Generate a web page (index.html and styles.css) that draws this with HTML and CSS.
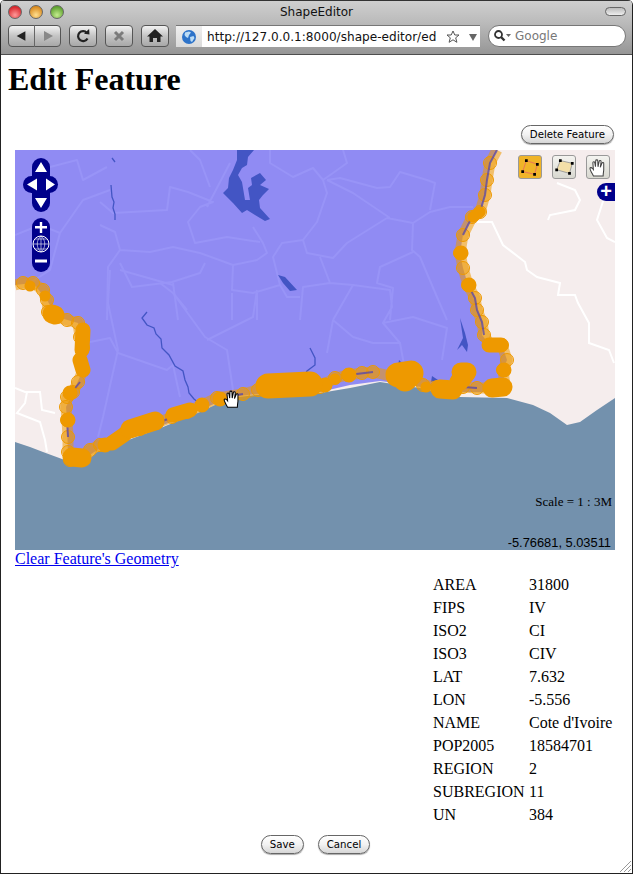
FILE: index.html
```html
<!DOCTYPE html>
<html lang="en">

<head>
    <meta charset="UTF-8">
    <title>ShapeEditor</title>
    <link rel="stylesheet" href="styles.css">
</head>

<body>
    <div class="window">
        <div class="chrome">
            <div class="titlebar">
                <span class="light light-red"></span>
                <span class="light light-yellow"></span>
                <span class="light light-green"></span>
                <span class="title">ShapeEditor</span>
                <span class="pill"></span>
            </div>
            <div class="toolbar">
                <div class="tool-btn tool-double">
                    <svg width="26" height="22" viewBox="0 0 26 22"><path class="ic-dark" d="M17 6v10l-9-5z"/></svg>
                    <svg width="26" height="22" viewBox="0 0 26 22"><path class="ic-soft" d="M9 6v10l9-5z"/></svg>
                </div>
                <div class="tool-btn tool-reload">
                    <svg width="26" height="22" viewBox="0 0 26 22"><path class="ic-line" d="M17.500 13.500a5 5 0 1 1-.6-5.600"/><path class="ic-dark" d="M14 8.800l5.500.6-.4-5.500z"/></svg>
                </div>
                <div class="tool-btn tool-stop">
                    <svg width="26" height="22" viewBox="0 0 26 22"><path class="ic-x" d="M9 7l8 8M17 7l-8 8"/></svg>
                </div>
                <div class="tool-btn tool-home">
                    <svg width="26" height="22" viewBox="0 0 26 22"><path class="ic-dark" d="M13 4l-8 7.500h2.500V17h3.500v-4h4v4h3.500v-5.500H21z"/></svg>
                </div>
                <div class="urlbar">
                    <div class="favicon">
                        <svg width="16" height="16" viewBox="0 0 16 16">
                            <circle class="globe-sea" cx="8" cy="8" r="7"/>
                            <path class="globe-land" d="M4 3.500l4-1 2 1-2 2.500-1 3-2-1-1.500-2zM9 8l3.500-1 1 2-2.500 4-1.500-1z"/>
                        </svg>
                    </div>
                    <div class="url">http://127.0.0.1:8000/shape-editor/ed</div>
                    <svg class="url-star" width="16" height="16" viewBox="0 0 16 16"><path class="ic-star" d="M8 2l1.800 4h4.200l-3.300 2.800 1.200 4.500L8 10.800l-3.900 2.500 1.200-4.500L2 6h4.200z"/></svg>
                    <svg class="url-drop" width="10" height="10" viewBox="0 0 10 10"><path class="ic-grey" d="M1 2h8l-4 7z"/></svg>
                </div>
                <div class="search">
                    <svg width="20" height="14" viewBox="0 0 20 14"><circle class="ic-lens" cx="5.500" cy="5.500" r="3.500"/><path class="ic-handle" d="M8 8l3.500 3.500"/><path class="ic-grey" d="M13 5h5l-2.500 3z"/></svg>
                    <span>Google</span>
                </div>
            </div>
        </div>

        <div class="page">
            <h1>Edit Feature</h1>
            <div class="delete-row"><button class="btn">Delete Feature</button></div>

            <div class="map">
                <svg class="map-svg" width="600" height="400" viewBox="15 150 600 400">
                    <defs>
                        <marker id="vx" markerUnits="userSpaceOnUse" markerWidth="16" markerHeight="16" refX="8" refY="8">
                            <circle class="vertex" cx="8" cy="8" r="6.500"/>
                        </marker>
                    </defs>
                    <rect class="land" x="15" y="150" width="600" height="400"/>

                    <!-- borders in the neighbouring countries -->
                    <path class="land-line" d="M477 222l15 0 11 23 22 17 2 8 10 7 23 6-2 12 17 0 3 8 11 20 0 20 20 7 5 13M557 183l18 7 5 10-5 10-25 5-2 5M15 388l10 4 15 0 2 18 13 3M27 392l-2 11-8 10 23 9 5 18 2 12M605 195l-8 25 10 18 8 4"/>

                    <path class="sea" d="M15 442L30 447 43 452 62 459 80 467 97 452 123 442 163 427 200 412 230 398 257 395 320 393 350 388 380 382 420 388 460 397 507 398 533 405 550 413 567 425 580 422 597 410 615 398V550H15Z"/>

                    <path class="country" d="M15 150H497L490 163 487 180 485 195 480 212 472 217 463 235 460 253 463 268 468 285 475 298 477 310 482 322 482 335 490 345 502 345 507 360 503 370 505 387 490 392 463 392 437 390 410 385 380 381 350 385 320 392 257 394 230 397 200 410 163 425 123 440 97 450 80 462 68 458 67 420 66 407 73 392 83 370 80 337 78 323 57 317 47 300 33 283 15 285Z"/>

                    <!-- regions -->
                    <path class="region" d="M100 202L113 213 167 210 170 187 188 192 213 202 200 207 188 222 195 243 227 237 260 242M120 250L150 252 173 247 200 253 233 265 257 260 267 253 263 243 253 227M100 225L115 232 120 250 108 267 107 320M120 263L132 287 172 282 200 273 205 263M173 283L178 320M233 265L232 290 253 293 280 285 273 257 282 243 303 240 317 222 327 193 323 180 313 168 293 177 270 163 270 150M303 240L307 253 333 258 347 243 387 218 413 223 430 212 450 207 473 207M327 180L340 178 377 188 390 187 400 172 427 180 435 183 430 210M343 150L347 163 333 173 323 180M390 218L353 193 327 180M413 223L412 250 420 257 437 297 447 320M413 252L380 267 377 283 393 288 390 320M320 257L330 283 303 287 300 320M330 283L353 285 333 320M353 285L390 290 392 307 383 323 413 317 447 328 442 360M232 293L232 320M257 293L257 320M280 285L287 297 300 297M190 150L200 160 210 187M230 163L207 207"/>
                    <path class="region" d="M50 167L77 160 83 180 107 167M60 233L83 200 110 190M110 270L108 303 118 350 103 417 98 437M90 342L110 338 118 353 167 370 173 365 180 397M187 310L173 293 205 337 227 350 233 390M257 290L253 317 207 340M173 285L120 270M160 283L173 293M333 320L327 353M383 323L400 343 373 343 353 337 333 320M400 343L405 370M15 235L40 225 60 233 50 270 30 283"/>

                    <!-- lakes and rivers -->
                    <path class="water" d="M237 150L254 150 248 157 247 165 242 168 238 175 242 182 245 200 250 200 248 188 252 185 251 178 260 173 266 180 260 185 269 189 263 195 259 200 260 208 270 219 265 221 255 215 247 210 242 213 233 203 223 193 228 188 229 178 233 170 237 160Z"/>
                    <path class="water" d="M278 275L285 277 297 290 290 291 283 283ZM460 318L465 333 468 345 467 352 462 345 457 350 463 338ZM399 360L403 364 397 372ZM432 376L438 380 431 382Z"/>
                    <path class="river" d="M147 312l-5 6 5 7 7 3 2 6 5 5 1 9 7 7 6 11 8 5 2 9 3 7 1 6 5 6 5 4M112 158l3 4M111 185l1 12 2 5-1 6 2 6 0 6M310 348l5 10 0 7-8 6-3 6"/>

                    <!-- edited geometry -->
                    <path class="ring" marker-mid="url(#vx)" d="M497 150L490 163 487 180 485 195 480 212 472 217 463 235 460 253 463 268 468 285 475 298 477 310 482 322 484 335 490 345 502 345 507 360 503 370 505 387 490 388 477 388 463 387 453 390 437 387 423 385 410 373 395 377 373 372 362 373 348 375 335 378 320 387 298 385 270 385 258 390 243 394 217 398 202 405 187 412 172 417 157 423 140 429 125 433 113 442 100 445 90 450 80 458 70 460 68 452 68 437 67 420 66 407 67 397 73 392 78 382 83 370 80 360 83 348 80 337 78 323 67 320 57 317 48 312 47 300 43 290 33 283 23 283 15 285"/>
                    <path class="edge" d="M497 150L490 163 487 180 485 195 480 212M472 217L463 235M468 285L475 298 477 310 482 322 484 335M477 388L463 387M437 387L423 385M373 372L348 375M243 394L217 398M187 412L157 423M80 382L72 392M68 437L67 420"/>

                    <path class="blob" d="M461 253h.01M469 285h.01M489 345L501 345M504 370h.01M349 375h.01M202 405h.01M220 399h.01M68 420h.01M70 393h.01M83 330L82 350M80 360L83 370M325 385h.01M105 445h.01M125 434L112 443M173 415L190 410"/>
                    <path class="blob blob-s" d="M473 217L480 212M30 286h.01M45 296h.01M335 379h.01M426 387h.01"/>
                    <path class="blob blob-l" d="M492 388L503 387M461 372L467 372 459 382M52 314L55 315M72 457L82 458M130 429L155 421M440 389L453 390"/>
                    <path class="blob blob-xl" d="M398 375L411 373 405 379M268 386L310 384"/>

                    <path class="hand" transform="translate(223 390) scale(1.150)" d="M4 15C3 13 1 10 1 8.500 1 7.500 2.500 7.500 3.200 8.500L4 9.500 3.500 3.500C3.500 2.300 5 2.300 5.200 3.500L5.800 7 6 1.800C6 .7 7.700 .7 7.800 1.800L8 7 9 2.300C9.200 1.200 10.800 1.400 10.700 2.600L10 7.500 11.500 3.800C11.900 2.800 13.300 3.300 13 4.400L13 10C12.700 12 12.500 13 12.500 15Z"/>
                </svg>

                <svg class="pan" width="36" height="54" viewBox="0 0 36 54">
                    <rect class="ctl" x="9" y="0" width="18" height="54" rx="9"/>
                    <rect class="ctl" x="0" y="18" width="35" height="17" rx="8.500"/>
                    <path class="ctl-w" d="M18 4l6 10H12zM18 50l-6-10h12zM4 26.500l10-6v12zM32 26.500l-9 6v-12z"/>
                </svg>
                <svg class="zoombar" width="18" height="54" viewBox="0 0 18 54">
                    <rect class="ctl" width="18" height="54" rx="9"/>
                    <path class="ctl-w" d="M7.800 4h2.400v4H15v2.400h-4.800V15H7.800v-4.600H3V8h4.800zM3 41.500h12v3H3z"/>
                    <circle class="ctl-globe" cx="9" cy="26" r="8"/>
                    <path class="ctl-mesh" d="M9 18v16M1 26h16M3 21h12M3 31h12M9 18c-5 4-5 12 0 16M9 18c5 4 5 12 0 16"/>
                </svg>

                <div class="map-tools">
                    <svg class="map-tool map-tool-on" width="24" height="24" viewBox="0 0 24 24">
                        <path class="poly-line" d="M8 5l12 4-3 11L4 17z"/>
                        <path class="poly-dots" d="M8 5h.01M20 9h.01M17 20h.01M4 17h.01"/>
                    </svg>
                    <svg class="map-tool" width="24" height="24" viewBox="0 0 24 24">
                        <path class="poly-fill" d="M8 5l13 3-3 11L4 15z"/>
                        <path class="poly-dots" d="M8 5h.01M21 8h.01M18 19h.01M4 15h.01"/>
                    </svg>
                    <svg class="map-tool" width="24" height="24" viewBox="0 0 24 24">
                        <path class="hand hand-tool" transform="translate(2 3) scale(1.250)" d="M4 15C3 13 1 10 1 8.500 1 7.500 2.500 7.500 3.200 8.500L4 9.500 3.500 3.500C3.500 2.300 5 2.300 5.200 3.500L5.800 7 6 1.800C6 .7 7.700 .7 7.800 1.800L8 7 9 2.300C9.200 1.200 10.800 1.400 10.700 2.600L10 7.500 11.500 3.800C11.900 2.800 13.300 3.300 13 4.400L13 10C12.700 12 12.500 13 12.500 15Z"/>
                    </svg>
                </div>
                <div class="layer-tab">+</div>
                <div class="scale">Scale = 1 : 3M</div>
                <div class="coords">-5.76681, 5.03511</div>
            </div>

            <a class="clear-link" href="#">Clear Feature's Geometry</a>

            <div class="attrs">
                <div>AREA</div><div>31800</div>
                <div>FIPS</div><div>IV</div>
                <div>ISO2</div><div>CI</div>
                <div>ISO3</div><div>CIV</div>
                <div>LAT</div><div>7.632</div>
                <div>LON</div><div>-5.556</div>
                <div>NAME</div><div>Cote d'Ivoire</div>
                <div>POP2005</div><div>18584701</div>
                <div>REGION</div><div>2</div>
                <div>SUBREGION</div><div>11</div>
                <div>UN</div><div>384</div>
            </div>

            <div class="actions">
                <button class="btn">Save</button>
                <button class="btn">Cancel</button>
            </div>
        </div>

        <svg class="grip" width="14" height="14" viewBox="0 0 14 14"><path class="grip-line" d="M13 2L2 13M13 6L6 13M13 10L10 13"/></svg>
    </div>
</body>

</html>
```

FILE: styles.css
```css
* {
    padding: 0;
    margin: 0;
    box-sizing: border-box;
}

body {
    background-color: #fff;
    font-family: "Liberation Serif", serif;
    color: #000;
    overflow: hidden;
}

.window {
    position: relative;
    width: 633px;
    height: 874px;
    border: 1px solid #222;
    border-top: 0;
    border-radius: 5px 5px 0 0;
    overflow: hidden;
}

/* browser chrome */
.chrome {
    height: 55px;
    background: linear-gradient(#cfcfcf, #bbb 40%, #969696);
    border-top: 1px solid #333;
    border-bottom: 1px solid #4e4e4e;
    font-family: "DejaVu Sans", sans-serif;
}

.titlebar {
    display: flex;
    align-items: center;
    height: 21px;
    padding-left: 7px;
    gap: 7px;
    position: relative;
}

.light {
    width: 14px;
    height: 14px;
    border-radius: 50%;
    border: 1px solid #666;
}

.light-red {
    background: radial-gradient(circle at 50% 75%, #ff9a9a, #d8262c 75%);
}

.light-yellow {
    background: radial-gradient(circle at 50% 75%, #ffdf90, #d98a1e 75%);
}

.light-green {
    background: radial-gradient(circle at 50% 75%, #c4ec8e, #5ea12f 75%);
}

.title {
    position: absolute;
    left: 0;
    right: 0;
    text-align: center;
    font-size: 12px;
    color: #111;
}

.pill {
    position: absolute;
    right: 6px;
    top: 6px;
    width: 21px;
    height: 9px;
    border-radius: 5px;
    border: 1px solid #666;
    background: linear-gradient(#bbb, #eee);
}

.toolbar {
    display: flex;
    align-items: flex-start;
    height: 24px;
    margin-top: 3px;
    padding-left: 7px;
}

.tool-btn {
    height: 22px;
    display: flex;
    border: 1px solid #555;
    border-radius: 4px;
    background: linear-gradient(#f2f2f2, #c4c4c4 50%, #a8a8a8);
}

.tool-double {
    width: 53px;
}

.tool-double svg:first-child {
    border-right: 1px solid #666;
}

.tool-reload {
    width: 28px;
    margin-left: 8px;
}

.tool-stop {
    width: 28px;
    margin-left: 8px;
}

.tool-home {
    width: 28px;
    margin-left: 8px;
}

.tool-btn svg {
    flex: none;
    margin-top: -1px;
}

.ic-dark {
    fill: #222;
}

.ic-soft {
    fill: #888;
}

.ic-grey {
    fill: #666;
}

.ic-line {
    fill: none;
    stroke: #222;
    stroke-width: 2.2;
}

.ic-x {
    fill: none;
    stroke: #7b7b7b;
    stroke-width: 3;
}

.ic-star {
    fill: #fff;
    stroke: #555;
}

.ic-lens {
    fill: none;
    stroke: #333;
    stroke-width: 1.8;
}

.ic-handle {
    stroke: #333;
    stroke-width: 2.4;
}

.urlbar {
    display: flex;
    align-items: center;
    width: 304px;
    height: 22px;
    margin-left: 7px;
    background: #fff;
    border-top: 1px solid #777;
    overflow: hidden;
}

.favicon {
    display: flex;
    align-items: center;
    justify-content: center;
    flex: none;
    width: 26px;
    height: 22px;
    background: linear-gradient(#efefef, #d9d9d9);
}

.globe-sea {
    fill: #2d73c9;
}

.globe-land {
    fill: #bcdcf5;
}

.url {
    flex: none;
    width: 238px;
    margin-left: 5px;
    font-size: 12.100px;
    white-space: nowrap;
    color: #111;
}

.url-star {
    flex: none;
}

.url-drop {
    flex: none;
    margin-left: 7px;
}

.search {
    display: flex;
    align-items: center;
    width: 138px;
    height: 22px;
    margin-left: 8px;
    padding-left: 4px;
    border-radius: 11px;
    background: #fff;
    border: 1px solid #777;
    font-size: 12px;
    color: #777;
    gap: 2px;
}

/* page content */
.page {
    padding-left: 7px;
}

h1 {
    font-size: 32px;
    font-weight: bold;
    line-height: 37px;
    margin-top: 6px;
}

.delete-row {
    display: flex;
    justify-content: flex-end;
    margin-top: 27px;
    padding-right: 18px;
}

.btn {
    height: 19px;
    padding: 0 8px;
    border: 1px solid #666;
    border-radius: 10px;
    background: linear-gradient(#fff, #f2f2f2 50%, #d6d6d6);
    font-family: "DejaVu Sans", sans-serif;
    font-size: 10.200px;
    color: #000;
    box-shadow: 0 1px 1px #aaa;
}

.map {
    position: relative;
    width: 600px;
    height: 400px;
    margin-top: 6px;
    margin-left: 7px;
    overflow: hidden;
}

.map-svg {
    display: block;
}

.land {
    fill: #f5eded;
}

.sea {
    fill: #7391ad;
}

.land-line {
    fill: none;
    stroke: #fff;
    stroke-width: 2;
}

.country {
    fill: #908bf3;
}

.region {
    fill: none;
    stroke: #9894f7;
    stroke-width: 2;
    stroke-linejoin: round;
}

.water {
    fill: #4355c4;
}

.river {
    fill: none;
    stroke: #4355c4;
    stroke-width: 1.300;
}

.ring {
    fill: none;
    stroke: #ee9900;
    stroke-opacity: .55;
    stroke-width: 11;
    stroke-linejoin: round;
}

.vertex {
    fill: #ee9900;
    fill-opacity: .4;
    stroke: #ee9900;
    stroke-width: 1;
}

.edge {
    fill: none;
    stroke: #4a3fb5;
    stroke-width: 2;
    stroke-opacity: .7;
}

.blob {
    fill: none;
    stroke: #ee9900;
    stroke-width: 15;
    stroke-linecap: round;
    stroke-linejoin: round;
}

.blob-s {
    stroke-width: 11;
}

.blob-l {
    stroke-width: 19;
}

.blob-xl {
    stroke-width: 25;
}

.hand {
    fill: #fff;
    stroke: #000;
    stroke-width: .9;
}

.hand-tool {
    stroke: #444;
}

.pan {
    position: absolute;
    left: 8px;
    top: 8px;
}

.zoombar {
    position: absolute;
    left: 17px;
    top: 68px;
}

.ctl {
    fill: #00008b;
}

.ctl-w {
    fill: #fff;
}

.ctl-globe {
    fill: #00008b;
    stroke: #fff;
}

.ctl-mesh {
    fill: none;
    stroke: #fff;
    stroke-width: .6;
}

.map-tools {
    position: absolute;
    top: 5px;
    right: 5px;
    display: flex;
    gap: 10px;
}

.map-tool {
    display: block;
    border: 1px solid #999;
    border-radius: 3px;
    background: linear-gradient(#f4f4f0, #d8d8d0);
}

.map-tool-on {
    background: #f0b428;
}

.poly-line {
    fill: none;
    stroke: #e8705a;
}

.poly-fill {
    fill: #f3dfa8;
    stroke: #999;
}

.poly-dots {
    fill: none;
    stroke: #000;
    stroke-width: 3;
    stroke-linecap: square;
}

.layer-tab {
    position: absolute;
    top: 33px;
    right: 0;
    width: 18px;
    height: 18px;
    border-radius: 9px 0 0 9px;
    background: #00008b;
    color: #fff;
    font-family: "Liberation Sans", sans-serif;
    font-weight: bold;
    font-size: 20px;
    line-height: 17px;
    text-align: center;
}

.scale {
    position: absolute;
    right: 3px;
    bottom: 40px;
    font-size: 13px;
}

.coords {
    position: absolute;
    right: 4px;
    bottom: 0;
    font-family: "Liberation Sans", sans-serif;
    font-size: 12.850px;
}

.clear-link {
    display: block;
    width: max-content;
    margin-left: 7px;
    font-size: 16px;
    line-height: 18px;
    color: #00e;
}

.attrs {
    display: grid;
    grid-template-columns: 96px auto;
    grid-auto-rows: 23.100px;
    align-items: center;
    margin-top: 5px;
    margin-left: 425px;
    font-size: 16px;
    white-space: nowrap;
}

.actions {
    display: flex;
    justify-content: center;
    gap: 14px;
    margin-top: 8px;
    padding-right: 9px;
}

.grip {
    position: absolute;
    right: 0;
    bottom: 0;
}

.grip-line {
    fill: none;
    stroke: #999;
}
```
